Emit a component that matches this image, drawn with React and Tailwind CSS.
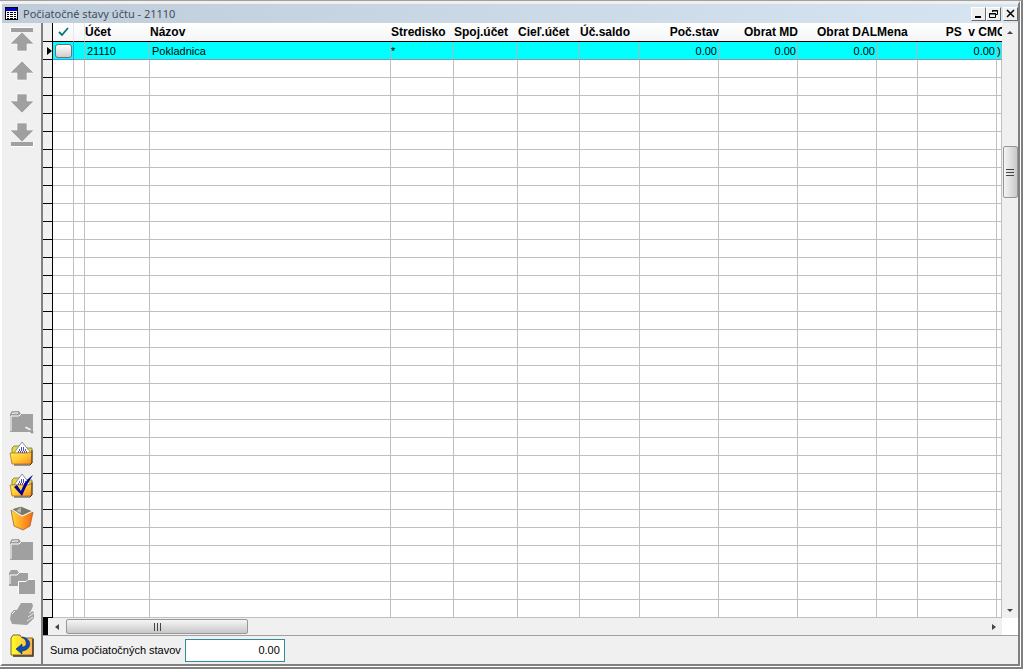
import React, { useState } from 'react'

const columns = [
  { key: 'ucet', title: 'Účet', width: 'w-[65px]' },
  { key: 'nazov', title: 'Názov', width: '' },
  { key: 'stredisko', title: 'Stredisko', width: 'w-[63px]' },
  { key: 'spojUcet', title: 'Spoj.účet', width: 'w-[64px]' },
  { key: 'cielUcet', title: 'Cieľ.účet', width: 'w-[62px]' },
  { key: 'saldo', title: 'Úč.saldo', width: 'w-[60px]' },
  { key: 'stav', title: 'Poč.stav', width: 'w-[79px]', right: true },
  { key: 'obratMd', title: 'Obrat MD', width: 'w-[79px]', right: true },
  { key: 'obratDal', title: 'Obrat DAL', width: 'w-[79px]', right: true },
  { key: 'mena', title: 'Mena', width: 'w-[41px]' },
  { key: 'psCm', title: 'PS  v CM', width: 'w-[79px]', right: true },
  { key: 'obratCm', title: 'O', width: 'w-[5px]' },
]

const rows = [
  {
    ucet: '21110',
    nazov: 'Pokladnica',
    stredisko: '*',
    stav: '0.00',
    obratMd: '0.00',
    obratDal: '0.00',
    psCm: '0.00',
    obratCm: ')',
  },
]

const emptyRows = Array.from({ length: 31 }, (_, i) => i)

const Arrow = ({ down, bar }) => (
  <svg width='26' height='26' viewBox='0 0 26 26' className={down ? 'rotate-180' : ''}>
    {bar && <path d='M2 2h22v4H2z' fill='#a0a0a0' />}
    {bar && <path d='M1.500 6V1.500H24' fill='none' stroke='#fff' />}
    {bar
      ? <path d='M13 6 L25 18 H18 V25 H8 V18 H1 Z' fill='#a0a0a0' stroke='#fff' strokeWidth='0.6' />
      : <path d='M13 3 L25 15 H18 V22 H8 V15 H1 Z' fill='#a0a0a0' stroke='#fff' strokeWidth='0.6' />}
  </svg>
)

const GrayFolder = ({ cursor }) => (
  <svg width='26' height='26' viewBox='0 0 26 26'>
    <path d='M1 23V5l2-3h7l2 3h12v18z' fill='#a0a0a0' />
    <path d='M2 22V7h8l2-2M3 5l1-1h5' fill='none' stroke='#fff' />
    {cursor && <path d='M15 18l2-2 8 7-2 2z' fill='#a0a0a0' />}
    {cursor && <path d='M16 19l2-1v2l2-1v2l2-1M20 24l2 1' fill='none' stroke='#fff' />}
  </svg>
)

const GrayFolders = () => (
  <svg width='26' height='26' viewBox='0 0 26 26'>
    <path d='M0 17V4l2-3h6l2 3h9v13z' fill='#a0a0a0' />
    <path d='M1 15V6h7l2-2' fill='none' stroke='#fff' />
    <path d='M10 25V12h7l2-1h7v14z' fill='#a0a0a0' />
    <path d='M9.500 24V12.500H17l2-2h5' fill='none' stroke='#fff' />
  </svg>
)

const OpenFolder = ({ checked }) => (
  <svg width='26' height='26' viewBox='0 0 26 26'>
    <defs>
      <linearGradient id='folderFront' x1='0' y1='0' x2='1' y2='1'>
        <stop offset='0' stopColor='#fff34a' />
        <stop offset='0.5' stopColor='#ffc933' />
        <stop offset='1' stopColor='#ff8a1c' />
      </linearGradient>
    </defs>
    <path d='M3 22V7l2-2h6l2 2h10v15z' fill='#e8d83a' stroke='#77764a' strokeWidth='0.8' />
    <path d='M5 12 L13 1 L22 12z' fill='#fff' stroke='#777' strokeWidth='0.8' />
    <path d='M12 7h1m1 0h1M10 9h1m1 0h1m1 0h1m1 0h1M9 11h1m1 0h1m1 0h1m1 0h1m1 0h1' stroke='#1717a8' strokeWidth='1.400' />
    <path d='M1 12h18l4-1-1 12H3z' fill='url(#folderFront)' stroke='#b5651d' strokeWidth='0.7' />
    <path d='M23 9v13l-2 2H5' fill='none' stroke='#4b3a23' />
    {checked && <path d='M5 14l3-2 4 6C15 10 19 5 24 2c-4 6-8 13-11 21z' fill='#0000a0' />}
  </svg>
)

const Bin = () => (
  <svg width='26' height='26' viewBox='0 0 26 26'>
    <defs>
      <linearGradient id='binSide' x1='0' x2='1'>
        <stop offset='0' stopColor='#ffdd35' />
        <stop offset='0.5' stopColor='#ff9f26' />
        <stop offset='1' stopColor='#f36b12' />
      </linearGradient>
    </defs>
    <path d='M2 5l10 5 12-3-3 14-7 4-9-4z' fill='url(#binSide)' stroke='#9b511f' strokeWidth='0.7' />
    <path d='M2 4l10-3 12 5-11 5z' fill='#77776e' stroke='#f4f4e8' strokeWidth='1.200' />
    <path d='M12 2v6l-5-2z' fill='#b8b8b0' />
  </svg>
)

const Printer = () => (
  <svg width='26' height='26' viewBox='0 0 26 26'>
    <path d='M8 9l4-7h11l1 3-2 5 3 1v6l-7 7-15-1-2-5 1-6 3-3z' fill='#a0a0a0' />
    <path d='M20 12l3-2M19 16l6-4M18 20l6-4M3 13l3-3' fill='none' stroke='#fff' strokeWidth='0.8' />
  </svg>
)

const ReturnFolder = () => (
  <svg width='26' height='26' viewBox='0 0 26 26'>
    <defs>
      <linearGradient id='returnFill' x1='0' x2='1'>
        <stop offset='0' stopColor='#ffff20' />
        <stop offset='1' stopColor='#ffae55' />
      </linearGradient>
    </defs>
    <path d='M2 22V5l2-3h7l2 3h11v17z' fill='url(#returnFill)' stroke='#806b35' />
    <path d='M24 6v17H4' fill='none' stroke='#3c3322' strokeWidth='1.400' />
    <path d='M13 4c7 1 9 6 7 10-1 2-4 4-7 4v3l-6-5 6-5v3c3 0 5-2 4-5 0-2-2-4-4-5z' fill='#0b4fb3' stroke='#052a70' strokeWidth='0.6' />
  </svg>
)

const ToolButton = ({ label, disabled, children }) => (
  <button type='button' aria-label={label} disabled={disabled} className='flex h-8 w-full items-center justify-center'>
    {children}
  </button>
)

const WindowButton = ({ label, children }) => (
  <button type='button' aria-label={label} className='flex h-[14px] w-[15px] items-center justify-center border border-t-white border-l-white border-r-[#696969] border-b-[#696969] bg-[#f0f0f0]'>
    {children}
  </button>
)

const TitleBar = () => (
  <header className='flex h-[19px] shrink-0 items-center bg-linear-to-r from-[#bfcddb] to-[#d7e4f2] pl-[3px]'>
    <svg width='13' height='13' viewBox='0 0 13 13'>
      <path d='M0 0h13v13H0z' />
      <path d='M1 1h11v3H1z' fill='#0000d0' />
      <path d='M1 4h11v8H1z' fill='#fff' />
      <path d='M2 5h2v1H2zM5 5h3v1H5zM9 5h2v1H9zM2 7h2v1H2zM5 7h3v1H5zM9 7h2v1H9zM2 9h2v1H2zM5 9h3v1H5zM9 9h2v1H9zM2 11h2v1H2zM5 11h3v1H5zM9 11h2v1H9z' />
    </svg>
    <h1 className="ml-[5px] flex-1 font-['Noto_Sans',sans-serif] text-[11px] leading-4 text-[#434e5a]">Počiatočné stavy účtu - 21110</h1>
    <WindowButton label='Minimalizovať'>
      <svg width='9' height='9' viewBox='0 0 9 9'><path d='M1 7h6v2H1z' /></svg>
    </WindowButton>
    <WindowButton label='Obnoviť'>
      <svg width='9' height='9' viewBox='0 0 9 9' fill='none' stroke='#000'>
        <path d='M3.500 3V1.500h5v4H7M3 2h6M.5 4.500h6v4h-6zM0 5h7' />
      </svg>
    </WindowButton>
    <div className='w-0.5' />
    <WindowButton label='Zavrieť'>
      <svg width='9' height='9' viewBox='0 0 9 9'><path d='M1 1l7 7M8 1l-7 7' stroke='#000' strokeWidth='1.500' /></svg>
    </WindowButton>
  </header>
)

const Toolbar = () => (
  <nav className='flex w-[41px] shrink-0 flex-col border-r-2 border-[#808080] bg-[#f0f0f0] pb-0.5'>
    <ToolButton label='Prvý záznam' disabled><Arrow bar /></ToolButton>
    <ToolButton label='Predchádzajúci záznam' disabled><Arrow /></ToolButton>
    <ToolButton label='Nasledujúci záznam' disabled><Arrow down /></ToolButton>
    <ToolButton label='Posledný záznam' disabled><Arrow down bar /></ToolButton>
    <div className='flex-1' />
    <ToolButton label='Hľadať' disabled><GrayFolder cursor /></ToolButton>
    <ToolButton label='Otvoriť'><OpenFolder /></ToolButton>
    <ToolButton label='Označiť'><OpenFolder checked /></ToolButton>
    <ToolButton label='Vymazať'><Bin /></ToolButton>
    <ToolButton label='Nový' disabled><GrayFolder /></ToolButton>
    <ToolButton label='Kopírovať' disabled><GrayFolders /></ToolButton>
    <ToolButton label='Tlačiť' disabled><Printer /></ToolButton>
    <ToolButton label='Návrat'><ReturnFolder /></ToolButton>
  </nav>
)

const Grid = () => {
  const [marked, setMarked] = useState(false)

  return (
    <div className='min-w-0 flex-1 overflow-hidden bg-white'>
      <table className='w-full table-fixed border-separate border-spacing-0'>
        <colgroup>
          <col className='w-[10px]' />
          <col className='w-[21px]' />
          <col className='w-[11px]' />
          {columns.map((col) => <col key={col.key} className={col.width} />)}
        </colgroup>
        <thead>
          <tr className='bg-linear-to-b from-white to-[#f4f5f7] text-xs leading-[18px] font-bold'>
            <th className='h-[19px] border-r border-b border-black bg-[#f0f0f0] p-0' />
            <th className='border-r border-b border-r-[#e6e8ec] border-b-black p-0'>
              <svg width='11' height='10' viewBox='0 0 11 10' className='mx-auto'>
                <path d='M1 5l3 3 6-7' fill='none' stroke='#0b7373' strokeWidth='1.800' />
              </svg>
            </th>
            <th className='border-r border-b border-r-[#e6e8ec] border-b-black p-0' />
            {columns.map((col) => (
              <th key={col.key} className={`overflow-hidden border-b border-black p-0 whitespace-pre ${col.right ? 'text-right' : 'text-left'}`}>
                {col.title}
              </th>
            ))}
          </tr>
        </thead>
        <tbody>
          {rows.map((row) => (
            <tr key={row.ucet} className='bg-[#00ffff] text-[11px] leading-4'>
              <td className='h-[18px] border-r border-b border-black bg-[#f0f0f0] p-0'>
                <svg width='5' height='8' viewBox='0 0 5 8' className='ml-auto'><path d='M0 0l5 4-5 4z' /></svg>
              </td>
              <td className='border-r border-b border-[#4a90e0] p-0'>
                <input
                  type='checkbox'
                  aria-label='Označiť riadok'
                  checked={marked}
                  onChange={(e) => setMarked(e.target.checked)}
                  className='mx-auto block h-[14px] w-[17px] appearance-none rounded-[3px] border border-[#707070] bg-linear-to-b from-white to-[#cfcfcf] checked:bg-[#0b7373]'
                />
              </td>
              <td className='border-r border-b border-r-[#a8b8b8] border-b-[#8098a8] p-0' />
              {columns.map((col) => (
                <td key={col.key} className={`overflow-hidden border-r border-b border-r-[#a8b8b8] border-b-[#8098a8] pt-px pb-0 ${col.right ? 'pr-px pl-0 text-right' : col.key === 'obratCm' || col.key === 'stredisko' ? 'px-0' : 'pr-0 pl-0.5'}`}>
                  {row[col.key]}
                </td>
              ))}
            </tr>
          ))}
          {emptyRows.map((i) => (
            <tr key={i}>
              <td className='h-[18px] border-r border-b border-black bg-[#f0f0f0] p-0' />
              <td className='border-r border-b border-[#c0c0c0] p-0' />
              <td className='border-r border-b border-[#c0c0c0] p-0' />
              {columns.map((col) => <td key={col.key} className='border-r border-b border-[#c0c0c0] p-0' />)}
            </tr>
          ))}
        </tbody>
      </table>
    </div>
  )
}

const VerticalScroll = () => (
  <div className='flex w-4 shrink-0 flex-col items-center bg-[#f0f0f0]'>
    <button type='button' aria-label='Posunúť hore' className='flex h-[18px] w-full items-center justify-center'>
      <svg width='6' height='3' viewBox='0 0 6 3'><path d='M0 3l3-3 3 3z' fill='#444' /></svg>
    </button>
    <div className='flex w-full flex-1 flex-col items-center'>
      <div className='grow-[105]' />
      <div className='flex h-[52px] w-[15px] flex-col items-center justify-center gap-0.5 rounded-xs border border-[#979797] bg-linear-to-r from-[#f5f5f5] to-[#c8c8cb]'>
        <div className='h-px w-2 bg-[#444]' />
        <div className='h-px w-2 bg-[#444]' />
        <div className='h-px w-2 bg-[#444]' />
      </div>
      <div className='grow-[404]' />
    </div>
    <button type='button' aria-label='Posunúť dole' className='flex h-[15px] w-full items-center justify-center'>
      <svg width='6' height='3' viewBox='0 0 6 3'><path d='M0 0l3 3 3-3z' fill='#444' /></svg>
    </button>
  </div>
)

const HorizontalScroll = () => (
  <div className='flex h-[17px] shrink-0 bg-white pr-4'>
    <div className='w-[5px] bg-black' />
    <div className='flex flex-1 items-center bg-[#f0f0f0]'>
      <button type='button' aria-label='Posunúť vľavo' className='flex h-full w-[18px] items-center justify-center'>
        <svg width='4' height='6' viewBox='0 0 4 6'><path d='M4 0L0 3l4 3z' fill='#444' /></svg>
      </button>
      <div className='flex h-[15px] w-[182px] items-center justify-center gap-0.5 rounded-xs border border-[#979797] bg-linear-to-b from-[#f5f5f5] to-[#c8c8cb]'>
        <div className='h-2 w-px bg-[#444]' />
        <div className='h-2 w-px bg-[#444]' />
        <div className='h-2 w-px bg-[#444]' />
      </div>
      <div className='flex-1' />
      <button type='button' aria-label='Posunúť vpravo' className='flex h-full w-[17px] items-center justify-center'>
        <svg width='4' height='6' viewBox='0 0 4 6'><path d='M0 0l4 3-4 3z' fill='#444' /></svg>
      </button>
    </div>
  </div>
)

const App = () => {
  return (
    <div className="flex min-h-screen flex-col border-t border-r-2 border-b-2 border-t-[#a0a0a0] border-r-[#808080] border-b-[#808080] bg-white pr-px pb-px font-['Liberation_Sans',Arial,sans-serif] text-black">
      <div className='flex flex-1 flex-col border-t-[3px] border-r-2 border-b-2 border-l-2 border-t-[#f0f0f0] border-r-[#808080] border-b-[#808080] border-l-white bg-[#f0f0f0]'>
        <TitleBar />
        <div className='flex flex-1'>
          <Toolbar />
          <main className='flex min-w-0 flex-1 flex-col'>
            <div className='flex'>
              <Grid />
              <VerticalScroll />
            </div>
            <HorizontalScroll />
            <footer className='flex flex-1 items-center border-t border-[#a0a0a0] pl-[7px]'>
              <label htmlFor='suma' className='text-[11px]'>Suma počiatočných stavov</label>
              <input id='suma' readOnly value='0.00' className='ml-1 h-[23px] w-[100px] border border-[#2f8f96] bg-white px-1 text-right text-[11px]' />
            </footer>
          </main>
        </div>
      </div>
    </div>
  )
}

export default App
